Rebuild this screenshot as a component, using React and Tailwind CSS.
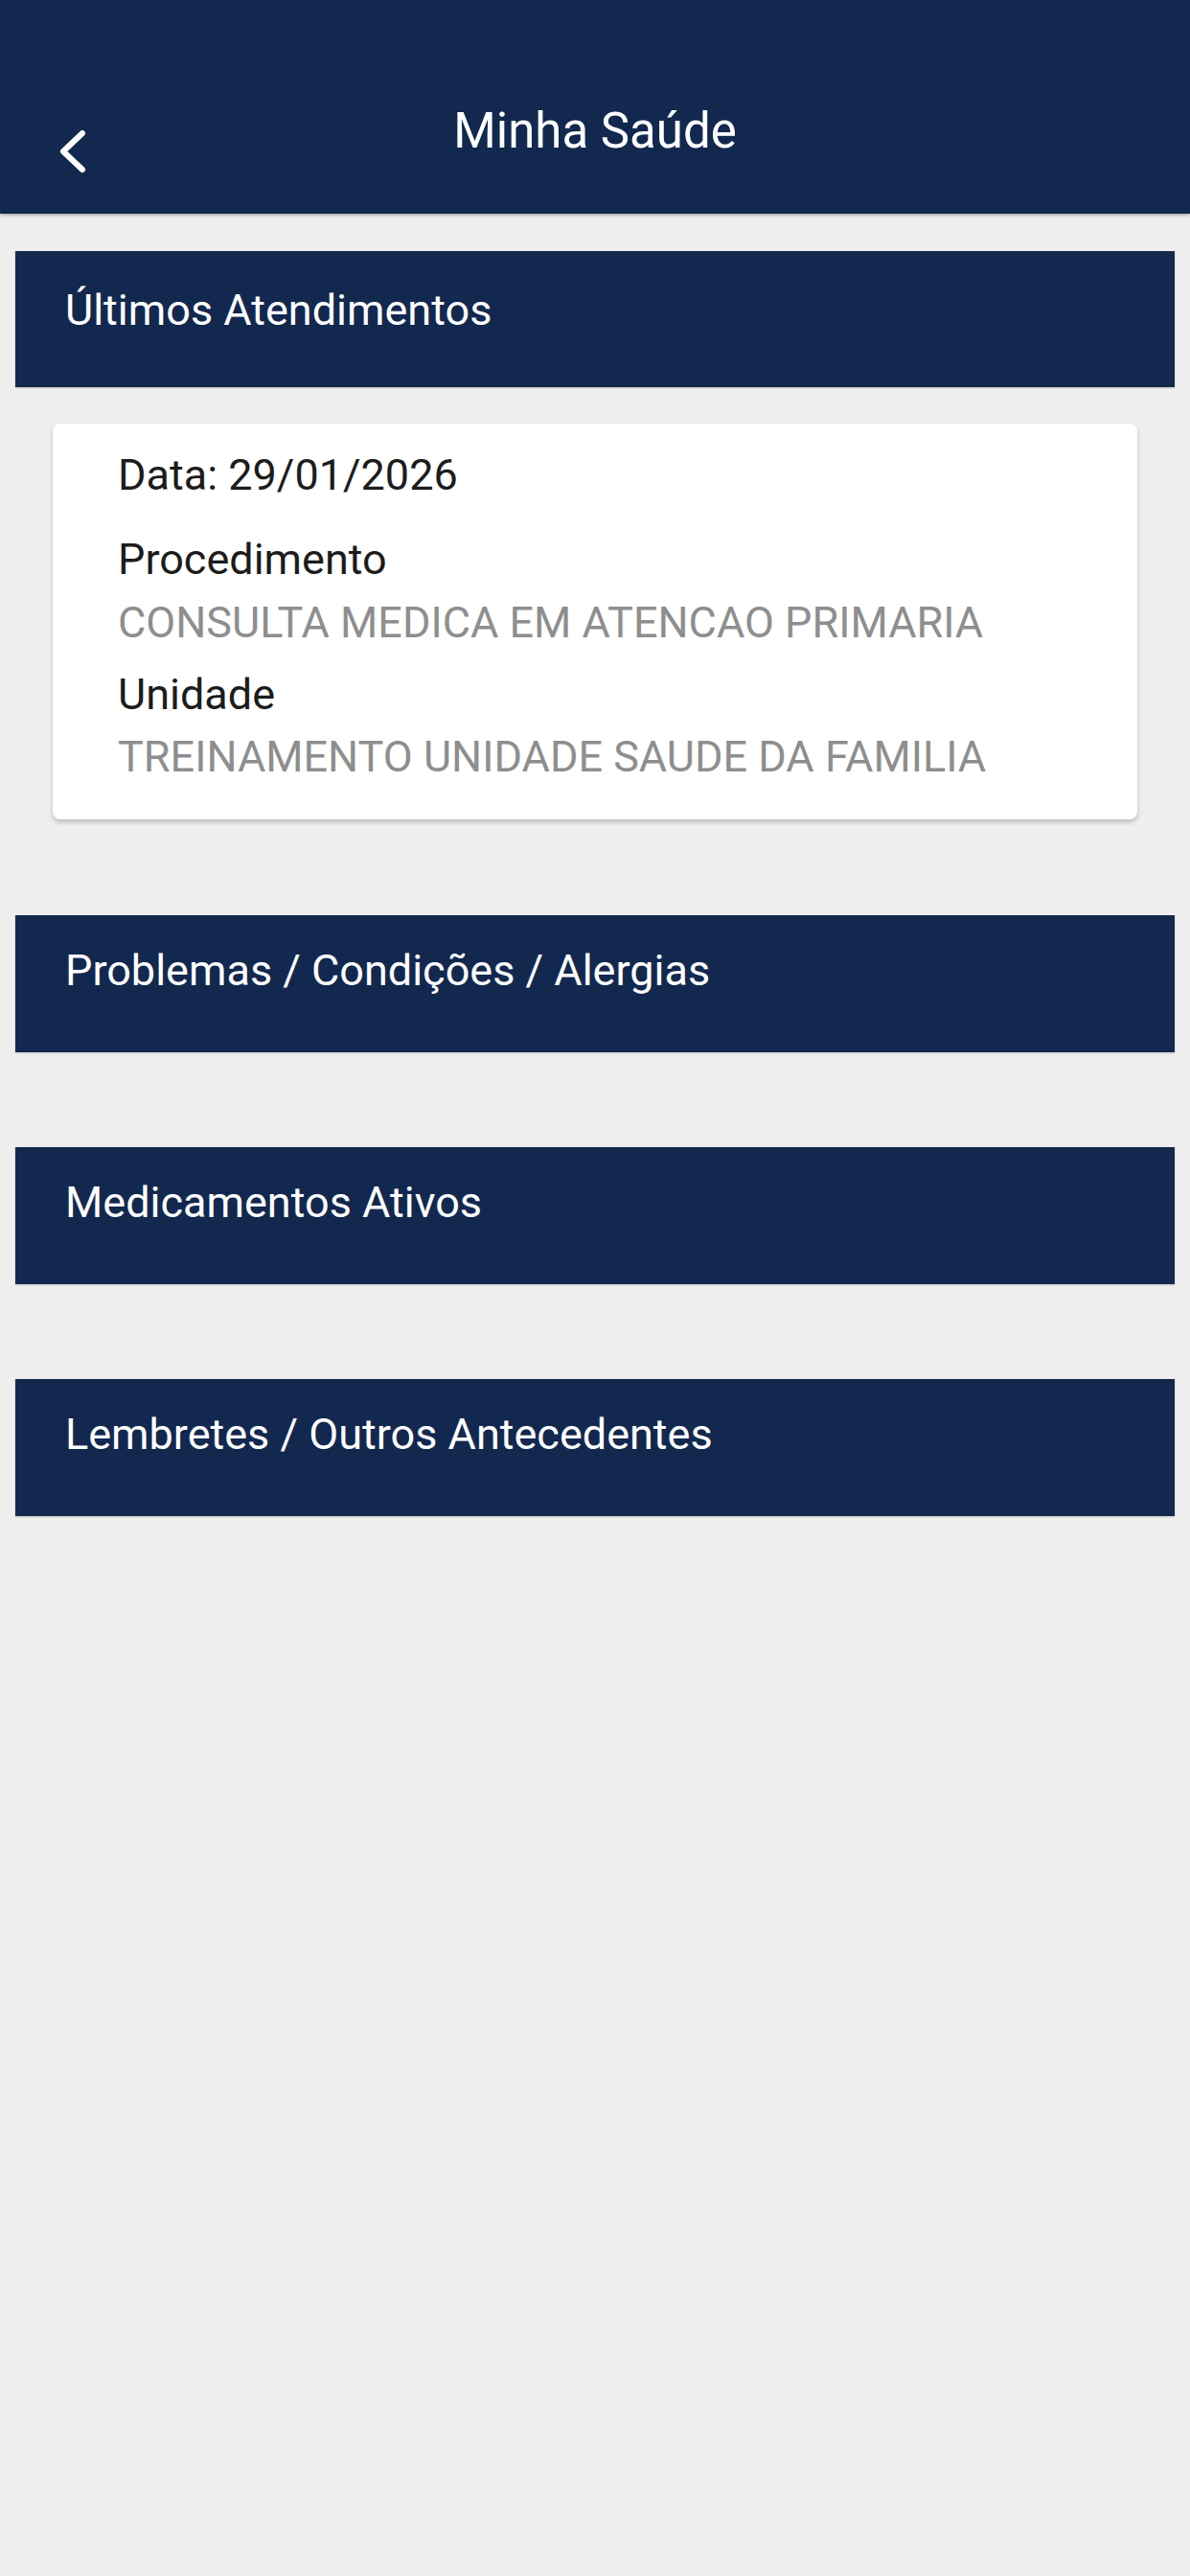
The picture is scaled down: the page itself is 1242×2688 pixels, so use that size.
export default function App() {
  const sections = [
    { title: "Problemas / Condições / Alergias" },
    { title: "Medicamentos Ativos" },
    { title: "Lembretes / Outros Antecedentes" },
  ]

  return (
    <div className="min-h-[2688px] w-full bg-[#efefef] font-['Roboto',sans-serif]">
      {/* toolbar */}
      <header className="grid h-[223px] grid-cols-[1fr_auto_1fr] bg-[#13284f] shadow-[0_2px_3px_rgba(0,0,0,0.25)]">
        <div className="pl-[60px] pt-[135px]">
          <svg width="32" height="46" viewBox="0 0 32 46" fill="none">
            <path d="M26 4 L6 23 L26 42" stroke="white" strokeWidth="6" strokeLinecap="round" strokeLinejoin="round" />
          </svg>
        </div>
        <h1 className="pt-[107px] text-[51px] leading-[60px] font-normal text-white">Minha Saúde</h1>
        <div></div>
      </header>

      <main className="flex flex-col px-[16px] pt-[39px]">
        <section className="flex flex-col">
          <div className="h-[142px] bg-[#13284f] pl-[52px] pt-[32px] text-[45px] leading-[60px] text-white shadow-[0_1px_2px_rgba(0,0,0,0.2)]">
            Últimos Atendimentos
          </div>
          <div className="mx-[39px] mt-[38px] mb-[100px] rounded-[8px] bg-white pt-[26px] pb-[37px] pl-[68px] text-[45px] leading-[56px] shadow-[0_3px_5px_rgba(0,0,0,0.22)]">
            <p className="text-[#1c1c1c]">Data: 29/01/2026</p>
            <p className="mt-[32px] text-[#1c1c1c]">Procedimento</p>
            <p className="mt-[10px] text-[#8e8e8e]">CONSULTA MEDICA EM ATENCAO PRIMARIA</p>
            <p className="mt-[19px] text-[#1c1c1c]">Unidade</p>
            <p className="mt-[9px] text-[#8e8e8e]">TREINAMENTO UNIDADE SAUDE DA FAMILIA</p>
          </div>
        </section>

        {sections.map((s) => (
          <section key={s.title} className="mb-[99px] flex flex-col">
            <div className="h-[143px] bg-[#13284f] pl-[52px] pt-[28px] text-[45px] leading-[60px] text-white shadow-[0_1px_2px_rgba(0,0,0,0.2)]">
              {s.title}
            </div>
          </section>
        ))}
      </main>
    </div>
  )
}
